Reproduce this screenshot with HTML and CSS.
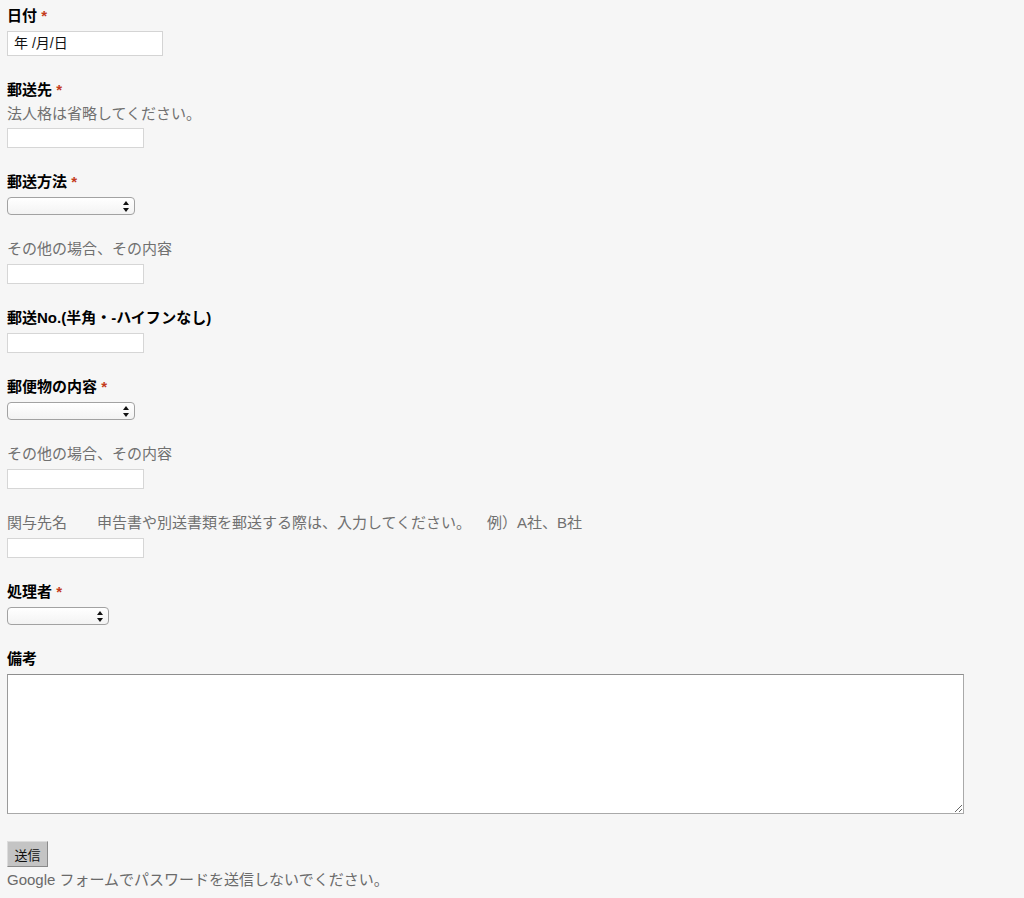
FILE: index.html
```html
<!DOCTYPE html>
<html lang="ja">
<head>
<meta charset="utf-8">
<title>フォーム</title>
<link rel="stylesheet" href="styles.css">
</head>
<body>
<form class="form">
  <div class="field">
    <div class="label">日付 <span class="req">*</span></div>
    <div class="date-input">年 /月/日</div>
  </div>
  <div class="field">
    <div class="label">郵送先 <span class="req">*</span></div>
    <div class="help">法人格は省略してください。</div>
    <input class="text" type="text">
  </div>
  <div class="field">
    <div class="label">郵送方法 <span class="req">*</span></div>
    <div class="select">
      <svg class="arrows" width="6" height="11" viewBox="0 0 6 11"><path d="M3 0 L6 4 L0 4 Z M0 7 L6 7 L3 11 Z" fill="#111"/></svg>
    </div>
  </div>
  <div class="field">
    <div class="label plain">その他の場合、その内容</div>
    <input class="text" type="text">
  </div>
  <div class="field">
    <div class="label">郵送No.(半角・-ハイフンなし)</div>
    <input class="text" type="text">
  </div>
  <div class="field">
    <div class="label">郵便物の内容 <span class="req">*</span></div>
    <div class="select">
      <svg class="arrows" width="6" height="11" viewBox="0 0 6 11"><path d="M3 0 L6 4 L0 4 Z M0 7 L6 7 L3 11 Z" fill="#111"/></svg>
    </div>
  </div>
  <div class="field">
    <div class="label plain">その他の場合、その内容</div>
    <input class="text" type="text">
  </div>
  <div class="field">
    <div class="label plain">関与先名　　申告書や別送書類を郵送する際は、入力してください。　  例）A社、B社</div>
    <input class="text" type="text">
  </div>
  <div class="field">
    <div class="label">処理者 <span class="req">*</span></div>
    <div class="select narrow">
      <svg class="arrows" width="6" height="11" viewBox="0 0 6 11"><path d="M3 0 L6 4 L0 4 Z M0 7 L6 7 L3 11 Z" fill="#111"/></svg>
    </div>
  </div>
  <div class="field last">
    <div class="label">備考</div>
    <textarea class="area"></textarea>
  </div>
  <button class="submit" type="button">送信</button>
  <div class="note">Google フォームでパスワードを送信しないでください。</div>
</form>
</body>
</html>
```

FILE: styles.css
```css
html, body {
  margin: 0;
  padding: 0;
  background: #f6f6f6;
}
body {
  font-family: "Liberation Sans", "Noto Sans CJK JP", sans-serif;
  font-size: 15px;
  color: #000;
}
.form {
  display: flex;
  flex-direction: column;
  align-items: flex-start;
  padding: 7px 0 0 7px;
}
.field {
  display: flex;
  flex-direction: column;
  align-items: flex-start;
  margin-bottom: 25px;
}
.field.last {
  margin-bottom: 27px;
}
.label {
  font-weight: bold;
  font-size: 15px;
  line-height: 18px;
  margin-bottom: 6px;
  white-space: pre;
}
.label.plain {
  font-weight: normal;
  color: #707070;
}
.req {
  color: #c43b1d;
  font-weight: bold;
}
.help {
  color: #707070;
  font-size: 15px;
  line-height: 18px;
  margin-bottom: 5px;
}
.date-input {
  box-sizing: border-box;
  width: 156px;
  height: 25px;
  background: #fff;
  border: 1px solid #d4d4d4;
  padding: 0 0 0 6px;
  font-size: 14px;
  line-height: 23px;
  color: #111;
}
.text {
  box-sizing: border-box;
  display: block;
  width: 137px;
  height: 20px;
  margin: 0;
  background: #fff;
  border: 1px solid #d6d6d6;
  padding: 0 4px;
}
.select {
  box-sizing: border-box;
  width: 128px;
  height: 18px;
  border: 1px solid #a2a2a2;
  border-radius: 4px;
  background: linear-gradient(#ffffff, #f3f3f3);
  display: flex;
  align-items: center;
  justify-content: flex-end;
  padding-right: 5px;
}
.select.narrow {
  width: 102px;
}
.arrows {
  display: block;
}
.area {
  box-sizing: border-box;
  display: block;
  width: 957px;
  height: 140px;
  margin: 0;
  background: #fff;
  border: 1px solid #a9a9a9;
  border-top-color: #8e8e8e;
  border-left-color: #9a9a9a;
  resize: both;
}
.submit {
  box-sizing: border-box;
  width: 41px;
  height: 26px;
  margin: 0 0 4px 0;
  padding: 0;
  background: #c4c4c4;
  border: 1px solid;
  border-color: #dcdcdc #8a8a8a #8a8a8a #dcdcdc;
  font-family: "Liberation Sans", "Noto Sans CJK JP", sans-serif;
  font-size: 13px;
  color: #111;
}
.note {
  color: #6a6a6a;
  font-size: 15px;
  line-height: 18px;
}
```
